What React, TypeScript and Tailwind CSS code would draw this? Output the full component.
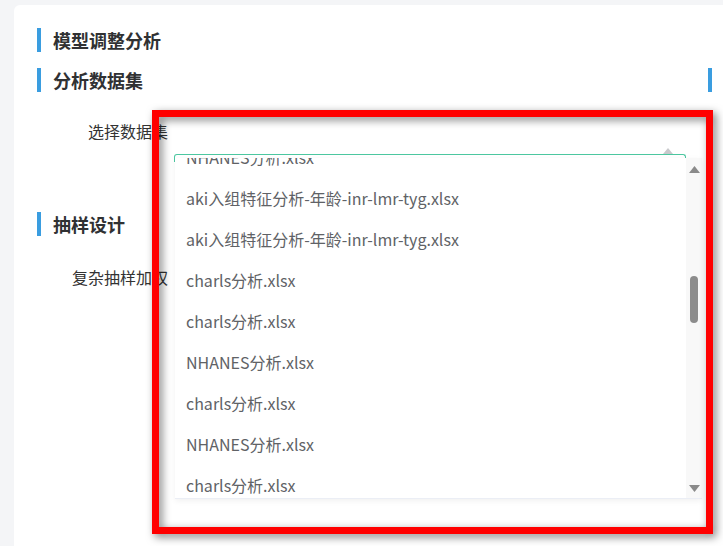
const files = [
  "NHANES分析.xlsx",
  "aki入组特征分析-年龄-inr-lmr-tyg.xlsx",
  "aki入组特征分析-年龄-inr-lmr-tyg.xlsx",
  "charls分析.xlsx",
  "charls分析.xlsx",
  "NHANES分析.xlsx",
  "charls分析.xlsx",
  "NHANES分析.xlsx",
  "charls分析.xlsx",
];

const SectionTitle = ({ text }: { text: string }) => {
  return (
    <div className="flex items-center h-[24px]">
      <span className="w-[4px] h-[24px] bg-[#3a9de0]" />
      <span className="ml-[12px] text-[18px] font-bold text-[#303133] leading-none">
        {text}
      </span>
    </div>
  );
};

const Arrow = ({ up }: { up?: boolean }) => (
  <svg width="11" height="7" viewBox="0 0 11 7">
    <polygon
      points={up ? "5.5,0 11,7 0,7" : "0,0 11,0 5.5,7"}
      fill="#8a8a8a"
    />
  </svg>
);

export default function App() {
  return (
    <div className="relative w-[723px] h-[546px] overflow-hidden bg-[#f4f5f7] font-['Noto_Sans_CJK_SC',sans-serif]">
      <div className="ml-[14px] mt-[5px] w-[730px] h-[560px] bg-white rounded-[6px] pt-[23px] pl-[23px]">
        <SectionTitle text="模型调整分析" />

        <div className="mt-[16px] w-[675px] flex items-center justify-between">
          <SectionTitle text="分析数据集" />
          <span className="w-[4px] h-[24px] bg-[#3a9de0]" />
        </div>

        <div className="mt-[28px] w-[131px] text-right text-[16px] leading-[22px] text-[#333]">
          选择数据集
        </div>

        <div className="mt-[70px]">
          <SectionTitle text="抽样设计" />
        </div>

        <div className="mt-[30px] w-[131px] text-right text-[16px] leading-[22px] text-[#333]">
          复杂抽样加权
        </div>
      </div>

      {/* select box edge + popper arrow */}
      <div className="absolute left-[174px] top-[154px] w-[512px] h-[8px] border border-b-0 border-[#4cc7a0] rounded-t-[3px]" />
      <svg className="absolute left-[663px] top-[148px]" width="10" height="6" viewBox="0 0 10 6">
        <polygon points="5,0 10,6 0,6" fill="#c8c9cc" />
      </svg>

      {/* dropdown list */}
      <div className="absolute left-[175px] top-[158px] w-[527px] h-[341px] flex bg-white overflow-hidden border-b border-[#ebeef5] shadow-[0_2px_6px_rgba(0,0,0,0.06)]">
        <div className="flex-1 -mt-[22px]">
          {files.map((f, i) => (
            <div
              key={i}
              className="h-[41px] flex items-center pl-[11px] text-[16px] text-[#606266] whitespace-nowrap"
            >
              {f}
            </div>
          ))}
        </div>
        <div className="w-[16px] flex flex-col items-center bg-[#f8f8f8] pt-[8px] pb-[6px]">
          <Arrow up />
          <div className="mt-[103px] w-[8px] h-[47px] rounded-full bg-[#8c8c8c]" />
          <div className="flex-1" />
          <Arrow />
        </div>
      </div>

      {/* red annotation frame */}
      <div className="absolute left-[152px] top-[110px] w-[561px] h-[424px] border-[7px] border-[#ff0000] drop-shadow-[3px_3px_4px_rgba(0,0,0,0.5)]" />
    </div>
  );
}
